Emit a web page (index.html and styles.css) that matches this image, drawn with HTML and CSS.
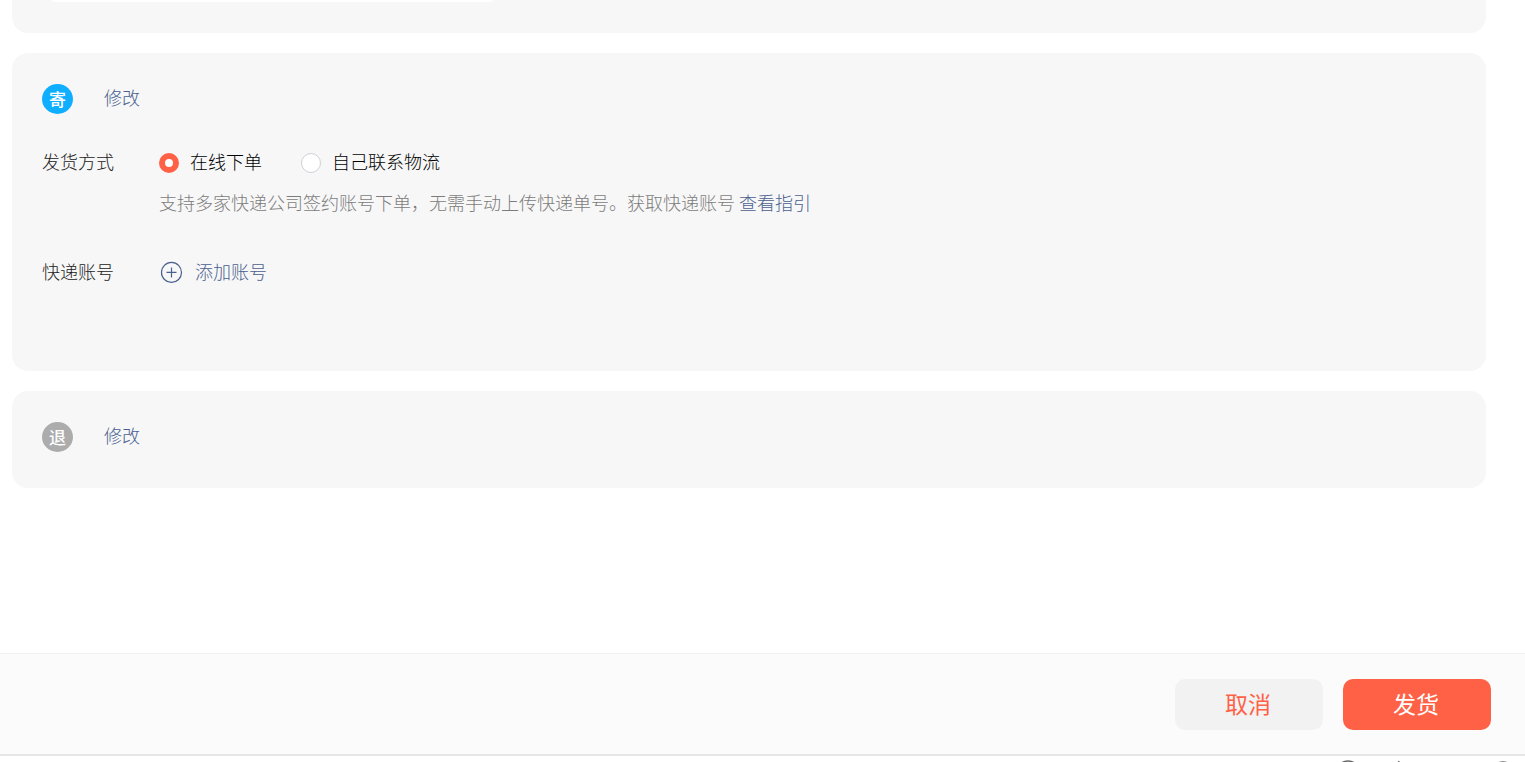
FILE: index.html
```html
<!DOCTYPE html>
<html lang="zh-CN">
<head>
<meta charset="utf-8">
<meta name="viewport" content="width=device-width, initial-scale=1">
<title>发货</title>
<link rel="stylesheet" href="styles.css">
</head>
<body>
<main class="content">
  <section class="card card-top"><div class="panel"></div></section>

  <section class="card card-send">
    <header class="card-head">
      <span class="badge badge-send">寄</span>
      <a class="link" href="#">修改</a>
    </header>
    <div class="row">
      <span class="label" id="method-label">发货方式</span>
      <div class="field">
        <div class="options" role="radiogroup" aria-labelledby="method-label">
          <label class="option"><input class="radio" type="radio" name="method" checked>在线下单</label>
          <label class="option"><input class="radio" type="radio" name="method">自己联系物流</label>
        </div>
        <p class="hint">支持多家快递公司签约账号下单，无需手动上传快递单号。获取快递账号 <a class="link" href="#">查看指引</a></p>
      </div>
    </div>
    <div class="row">
      <span class="label">快递账号</span>
      <button class="add" type="button">
        <svg class="add-icon" viewBox="0 0 25 24" aria-hidden="true"><circle cx="12.5" cy="13.4" r="10"/><path d="M12.5 8.4v10M7.5 13.4h10"/></svg>
        添加账号
      </button>
    </div>
  </section>

  <section class="card card-return">
    <header class="card-head">
      <span class="badge badge-return">退</span>
      <a class="link" href="#">修改</a>
    </header>
  </section>
</main>

<footer class="actions">
  <button class="btn btn-cancel" type="button">取消</button>
  <button class="btn btn-submit" type="button">发货</button>
</footer>

<div class="dock">
  <svg class="dock-icons" viewBox="0 0 190 6" aria-hidden="true">
    <circle cx="13" cy="17" r="12"/><path d="M64 5l-1 3"/><circle cx="168" cy="17" r="11"/>
  </svg>
</div>
</body>
</html>
```

FILE: styles.css
```css
* { box-sizing: border-box; }

body {
  display: flex;
  flex-direction: column;
  height: 100vh;
  margin: 0;
  overflow: hidden;
  background: #fff;
  color: #000;
  font: 300 18px/24px "Noto Sans CJK SC", sans-serif;
}

button, input { margin: 0; font: inherit; }

.content {
  display: flex;
  flex: 1;
  flex-direction: column;
  gap: 20px;
  min-height: 0;
  overflow: hidden;
  padding: 0 39px 0 12px;
}

.card {
  flex: none;
  padding: 31px 30px 36px;
  border-radius: 16px;
  background: #f7f7f7;
}

.card-top {
  margin-top: -60px;
  padding: 30px 30px 31px 36px;
}

.panel {
  width: 449px;
  max-width: 100%;
  height: 32px;
  border-radius: 8px;
  background: #fff;
}

.card-send { padding-bottom: 88px; }

.card-head {
  display: flex;
  align-items: flex-start;
  gap: 31px;
  height: 30px;
}

.card-head .link { line-height: 26px; }

.badge {
  width: 31px;
  height: 30px;
  border-radius: 50%;
  color: #fff;
  font-size: 17px;
  font-weight: 500;
  line-height: 30px;
  text-align: center;
}

.badge-send { background: #10aeff; }
.badge-return { background: #acacac; }

.link { color: #4a5f8f; text-decoration: none; }

.row {
  display: flex;
  gap: 45px;
  margin-top: 35px;
}

.row + .row { margin-top: 45px; }

.label { flex: none; color: #222; }

.options { display: flex; gap: 39px; }

.option { display: flex; align-items: center; gap: 11px; }

.radio {
  width: 20px;
  height: 20px;
  margin-top: 4px;
  border: 1px solid #cfcfd6;
  border-radius: 50%;
  background: #fff;
  appearance: none;
}

.radio:checked { border: 6px solid #ff6146; }

.hint { margin: 17px 0 0; color: #7c7c7c; }

.add {
  display: flex;
  align-items: center;
  gap: 11px;
  padding: 0;
  border: 0;
  background: none;
  color: #4a5f8f;
}

.add-icon {
  width: 25px;
  height: 24px;
  fill: none;
  stroke: currentColor;
  stroke-width: 1.2;
}

.actions {
  display: flex;
  justify-content: flex-end;
  gap: 20px;
  padding: 25px 34px 24px;
  border-top: 1px solid #f2f2f2;
  border-bottom: 2px solid #e6e6e6;
  background: #fbfbfb;
}

.btn {
  width: 148px;
  height: 51px;
  padding: 0 2px 4px 0;
  border: 0;
  border-radius: 10px;
  font-size: 23px;
  font-weight: 400;
}

.btn-cancel { background: #f2f2f2; color: #ff6146; }
.btn-submit { background: #ff6146; color: #fff; }

.dock {
  display: flex;
  justify-content: flex-end;
  height: 6px;
}

.dock-icons {
  width: 190px;
  height: 6px;
  fill: none;
  stroke: #666;
  stroke-width: 1.5;
}
```
